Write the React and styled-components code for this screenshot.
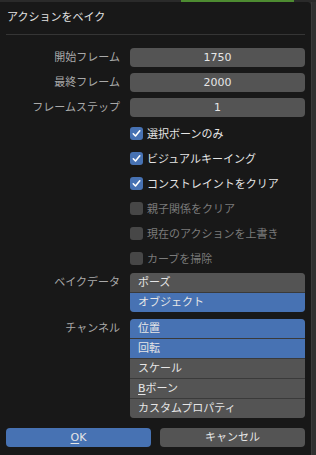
import React from 'react';
import styled, { createGlobalStyle } from 'styled-components';

const Global = createGlobalStyle`
    html, body {
        margin: 0;
        padding: 0;
        background: #2c2c2c;
    }
    body {
        width: 316px;
        height: 455px;
        overflow: hidden;
        font-family: "DejaVu Sans", "Noto Sans CJK JP", sans-serif;
        font-size: 11px;
    }
`;

const TopStrip = styled.div`
    height: 2px;
    display: flex;
    background: #2a2a2a;
`;

const StripGap = styled.div`
    width: 181px;
`;

const GreenBar = styled.div`
    width: 113px;
    background: #4d8b31;
`;

const Main = styled.div`
    display: flex;
    height: 453px;
`;

const Popup = styled.div`
    width: 311px;
    box-sizing: border-box;
    padding: 0 6px;
    background: #181818;
    border-top-right-radius: 4px;
    display: flex;
    flex-direction: column;
`;

const Side = styled.div`
    flex: 1;
    background: #303030;
    border-left: 1px solid #3a3a3a;
`;

const Title = styled.div`
    height: 32px;
    line-height: 32px;
    padding-left: 1px;
    color: #e2e2e2;
`;

const Separator = styled.div`
    height: 1px;
    background: #353535;
    margin-bottom: 13px;
`;

const Form = styled.div`
    display: grid;
    grid-template-columns: 114px 175px;
    column-gap: 10px;
    row-gap: 6px;
`;

const Label = styled.div`
    height: 19px;
    line-height: 19px;
    margin-top: ${p => p.$offset || 0}px;
    text-align: right;
    color: #a9a9a9;
    white-space: nowrap;
`;

const Field = styled.div`
    height: 19px;
    line-height: 19px;
    border-radius: 4px;
    background: #545454;
    color: #e6e6e6;
    text-align: center;
`;

const CheckRow = styled.div`
    grid-column: 2;
    height: 19px;
    display: flex;
    align-items: center;
    gap: 4px;
    padding-top: 1px;
    box-sizing: border-box;
    color: ${p => (p.disabled ? '#7b7b7b' : '#e6e6e6')};
`;

const Box = styled.div`
    width: 13px;
    height: 13px;
    border-radius: 3px;
    background: ${p => (p.checked ? '#4772b3' : p.disabled ? '#474747' : '#545454')};
    display: flex;
    align-items: center;
    justify-content: center;
`;

const List = styled.div`
    display: flex;
    flex-direction: column;
    gap: 1px;
    margin-top: ${p => p.$offset || 0}px;
    border-radius: 4px;
    overflow: hidden;
    background: #3a3a3a;
`;

const Item = styled.div`
    height: 19px;
    line-height: 19px;
    padding-left: 8px;
    color: #e6e6e6;
    background: ${p => (p.selected ? '#4772b3' : '#545454')};
`;

const Buttons = styled.div`
    display: grid;
    grid-template-columns: 145px 145px;
    column-gap: 9px;
    margin-top: 10px;
`;

const Button = styled.div`
    height: 19px;
    line-height: 19px;
    border-radius: 4px;
    text-align: center;
    color: #e6e6e6;
    background: ${p => (p.primary ? '#4772b3' : '#545454')};
`;

const U = styled.span`
    text-decoration: underline;
    text-underline-offset: 2px;
`;

const Check = () => (
    <svg width="9" height="9" viewBox="0 0 9 9">
        <path d="M1.3 4.8 L3.5 7 L7.8 1.8" fill="none" stroke="#fff" strokeWidth="1.6" strokeLinecap="round" strokeLinejoin="round" />
    </svg>
);

const Checkbox = ({ checked, disabled, children }) => (
    <CheckRow disabled={disabled}>
        <Box checked={checked} disabled={disabled}>{checked && <Check />}</Box>
        <span>{children}</span>
    </CheckRow>
);

export default function App() {
    return (
        <>
            <Global />
            <TopStrip>
                <StripGap />
                <GreenBar />
            </TopStrip>
            <Main>
                <Popup>
                    <Title>アクションをベイク</Title>
                    <Separator />
                    <Form>
                        <Label>開始フレーム</Label>
                        <Field>1750</Field>
                        <Label>最終フレーム</Label>
                        <Field>2000</Field>
                        <Label>フレームステップ</Label>
                        <Field>1</Field>

                        <Checkbox checked>選択ボーンのみ</Checkbox>
                        <Checkbox checked>ビジュアルキーイング</Checkbox>
                        <Checkbox checked>コンストレイントをクリア</Checkbox>
                        <Checkbox disabled>親子関係をクリア</Checkbox>
                        <Checkbox disabled>現在のアクションを上書き</Checkbox>
                        <Checkbox disabled>カーブを掃除</Checkbox>

                        <Label>ベイクデータ</Label>
                        <List>
                            <Item>ポーズ</Item>
                            <Item selected>オブジェクト</Item>
                        </List>
                        <Label $offset={1}>チャンネル</Label>
                        <List $offset={1}>
                            <Item selected>位置</Item>
                            <Item selected>回転</Item>
                            <Item>スケール</Item>
                            <Item><U>B</U>ボーン</Item>
                            <Item>カスタムプロパティ</Item>
                        </List>
                    </Form>
                    <Buttons>
                        <Button primary><U>O</U>K</Button>
                        <Button>キャンセル</Button>
                    </Buttons>
                </Popup>
                <Side />
            </Main>
        </>
    );
}
